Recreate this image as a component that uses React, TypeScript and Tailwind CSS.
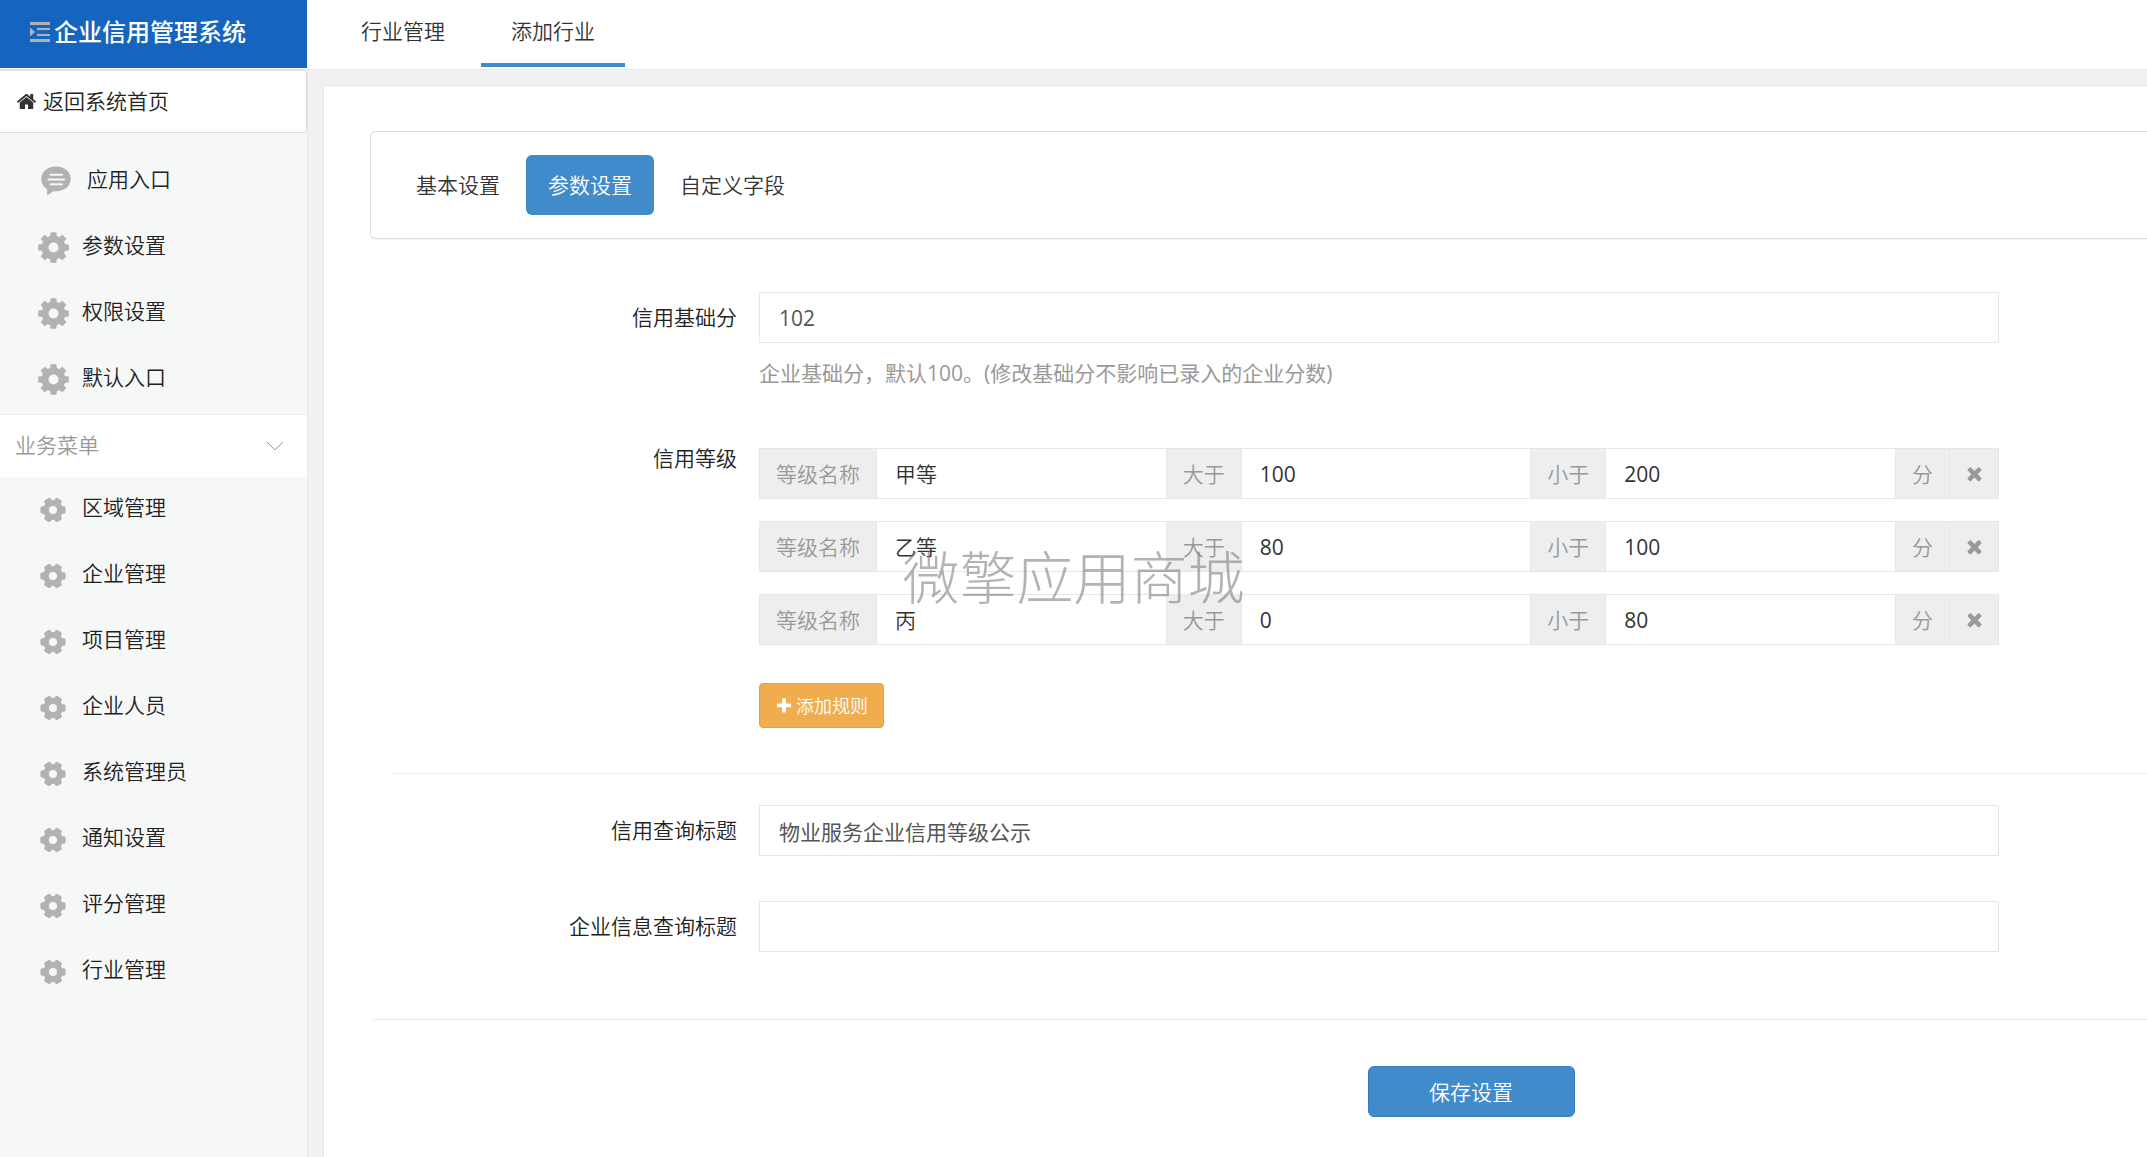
import { useState } from 'react'

interface Level {
  name: string
  above: string
  below: string
}

const topMenu = ['参数设置', '权限设置', '默认入口']
const businessMenu = [
  '区域管理',
  '企业管理',
  '项目管理',
  '企业人员',
  '系统管理员',
  '通知设置',
  '评分管理',
  '行业管理'
]
const settingTabs = ['基本设置', '参数设置', '自定义字段']

const initialLevels: Level[] = [
  { name: '甲等', above: '100', below: '200' },
  { name: '乙等', above: '80', below: '100' },
  { name: '丙', above: '0', below: '80' }
]

function IndentIcon() {
  return (
    <svg width="20" height="20" viewBox="0 0 20 20" fill="#b2b2b2">
      <rect x="0" y="0" width="20" height="3" />
      <rect x="7" y="6" width="13" height="2" />
      <rect x="7" y="12" width="13" height="2" />
      <rect x="0" y="17" width="20" height="3" />
      <path d="M0 5.500L5 10L0 14.500Z" />
    </svg>
  )
}

function HomeIcon() {
  return (
    <svg width="21" height="21" viewBox="0 0 1792 1792" fill="#333">
      <path d="M1472 992v480q0 26-19 45t-45 19h-384v-384h-256v384h-384q-26 0-45-19t-19-45v-480q0-1 .5-3t.5-3l575-474 575 474q1 2 1 6zm223-69l-62 74q-8 9-21 11h-3q-13 0-21-7l-692-577-692 577q-12 8-24 7-13-2-21-11l-62-74q-8-10-7-23.500t11-21.500l719-599q32-26 76-26t76 26l244 204v-195q0-14 9-23t23-9h192q14 0 23 9t9 23v408l219 182q10 8 11 21.500t-7 23.500z" />
    </svg>
  )
}

function PlusIcon() {
  return (
    <svg width="18" height="18" viewBox="0 0 1792 1792" fill="currentColor">
      <path d="M1600 736v192q0 40-28 68t-68 28h-416v416q0 40-28 68t-68 28h-192q-40 0-68-28t-28-68v-416h-416q-40 0-68-28t-28-68v-192q0-40 28-68t68-28h416v-416q0-40 28-68t68-28h192q40 0 68 28t28 68v416h416q40 0 68 28t28 68z" />
    </svg>
  )
}

function TimesIcon() {
  return (
    <svg width="21" height="21" viewBox="0 0 1792 1792" fill="currentColor">
      <path d="M1490 1322q0 40-28 68l-136 136q-28 28-68 28t-68-28l-294-294-294 294q-28 28-68 28t-68-28l-136-136q-28-28-28-68t28-68l294-294-294-294q-28-28-28-68t28-68l136-136q28-28 68-28t68 28l294 294 294-294q28-28 68-28t68 28l136 136q28 28 28 68t-28 68l-294 294 294 294q28 28 28 68z" />
    </svg>
  )
}

function CommentIcon() {
  return (
    <svg width="30" height="30" viewBox="0 0 30 30">
      <path
        d="M15 0.500C6.500 0.500 0.300 5.800 0.300 12.800C0.300 17.500 2.500 21 6 23L6.200 29.500L12.500 25.200C22.500 26.200 29.700 20.800 29.700 12.800C29.700 5.800 23.500 0.500 15 0.500Z"
        fill="#b2b2b2"
      />
      <path d="M9.500 8.700H21M7.500 13.500H23M9.500 18.200H21" stroke="#f6f8f8" strokeWidth="2" strokeLinecap="round" />
    </svg>
  )
}

// 8 square teeth
function GearIcon() {
  return (
    <svg width="31" height="31" viewBox="-15.5 -15.5 31 31" fill="#b2b2b2">
      <circle r="8.500" fill="none" stroke="#b2b2b2" strokeWidth="7" />
      {[0, 45, 90, 135, 180, 225, 270, 315].map(deg => (
        <path key={deg} d="M-3.500 -10L-2.900 -15.300H2.900L3.500 -10Z" transform={`rotate(${deg})`} />
      ))}
    </svg>
  )
}

// 6 rounded teeth
function CogIcon() {
  return (
    <svg width="26" height="26" viewBox="-13 -13 26 26" fill="#b2b2b2">
      <circle r="7" fill="none" stroke="#b2b2b2" strokeWidth="6" />
      {[30, 90, 150, 210, 270, 330].map(deg => (
        <rect key={deg} x="-3.800" y="-12.600" width="7.600" height="8" rx="2" transform={`rotate(${deg})`} />
      ))}
    </svg>
  )
}

function Sidebar() {
  return (
    <aside className="w-[308px] shrink-0 border-r border-[#e7e7e7] bg-[#f6f8f8]">
      <a
        href="#home"
        className="flex h-[63px] items-center gap-1.5 rounded-r border border-l-0 border-[#dddddd] bg-white pl-4"
      >
        <HomeIcon />
        <span className="pb-0.5">返回系统首页</span>
      </a>

      <nav className="pt-[15px]">
        <a href="#entry" className="flex h-[66px] items-center gap-4 pl-[41px]">
          <CommentIcon />
          <span className="pb-1">应用入口</span>
        </a>
        {topMenu.map(item => (
          <a key={item} href={`#${item}`} className="flex h-[66px] items-center gap-[13px] pl-[38px]">
            <GearIcon />
            <span className="pb-1">{item}</span>
          </a>
        ))}
      </nav>

      <button
        type="button"
        className="mt-0.5 flex h-[63px] w-full items-center justify-between border-t border-[#eeeeee] bg-white pr-[23px] pl-[15px] text-[#999999]"
      >
        <span className="pb-0.5">业务菜单</span>
        <svg width="18" height="10" viewBox="0 0 18 10" fill="none" stroke="#999">
          <path d="M1 1L9 9L17 1" />
        </svg>
      </button>

      <nav>
        {businessMenu.map(item => (
          <a key={item} href={`#${item}`} className="flex h-[66px] items-center gap-4 pl-10">
            <CogIcon />
            <span className="pb-1.5">{item}</span>
          </a>
        ))}
      </nav>
    </aside>
  )
}

function Addon({ children }: { children: string }) {
  return (
    <span className="flex shrink-0 items-center border-r border-[#e7e7eb] bg-[#eeeeee] px-4 text-[#999999]">
      {children}
    </span>
  )
}

function LevelRow({ level, onRemove }: { level: Level; onRemove: () => void }) {
  const inputClass = 'w-0 min-w-0 flex-1 border-r border-[#e7e7eb] bg-white px-[18px] text-[#333333] outline-none'
  return (
    <div className="flex h-[51px] border border-[#e7e7eb]">
      <Addon>等级名称</Addon>
      <input aria-label="等级名称" defaultValue={level.name} className={inputClass} />
      <Addon>大于</Addon>
      <input aria-label="大于" defaultValue={level.above} className={`${inputClass} font-normal`} />
      <Addon>小于</Addon>
      <input aria-label="小于" defaultValue={level.below} className={`${inputClass} font-normal`} />
      <Addon>分</Addon>
      <button
        type="button"
        aria-label="删除"
        onClick={onRemove}
        className="flex w-12 shrink-0 items-center justify-center bg-[#eeeeee] text-[#999999]"
      >
        <TimesIcon />
      </button>
    </div>
  )
}

function TextField({ id, label, value, help }: { id: string; label: string; value: string; help?: string }) {
  return (
    <div className="flex items-start">
      <label htmlFor={id} className="w-[367px] shrink-0 pt-[9px] text-right">
        {label}
      </label>
      <div className="ml-[22px] flex-1">
        <input
          id={id}
          defaultValue={value}
          className="block h-[51px] w-full border border-[#e7e7eb] bg-white px-[19px] font-normal text-[#555555] outline-none"
        />
        {help && <p className="mt-3.5 font-normal text-[#999999]">{help}</p>}
      </div>
    </div>
  )
}

export default function App() {
  const [levels, setLevels] = useState(initialLevels)
  const [activeTab, setActiveTab] = useState('参数设置')

  const addLevel = () => setLevels([...levels, { name: '', above: '', below: '' }])
  const removeLevel = (index: number) => setLevels(levels.filter((_, i) => i !== index))

  return (
    <div className="flex min-h-screen flex-col overflow-x-hidden bg-[#f1f1f1] font-['Open_Sans','Noto_Sans_CJK_SC',sans-serif] text-[21px] leading-[32px] font-[350] text-[#222222]">
      {/* Header */}
      <header className="flex h-[70px] border-b border-[#e7e7e7] bg-white">
        <div className="flex h-[68px] w-[307px] shrink-0 items-center gap-1 bg-[#1565c0] pb-1 pl-[30px] text-2xl font-medium text-white">
          <IndentIcon />
          企业信用管理系统
        </div>
        <nav className="flex h-[67px] gap-1.5 pl-6">
          <a href="#list" className="flex items-center border-b-4 border-transparent px-[30px] pb-0.5 text-[#333333]">
            行业管理
          </a>
          <a href="#add" className="flex items-center border-b-4 border-[#428bca] px-[30px] pb-0.5 text-[#333333]">
            添加行业
          </a>
        </nav>
      </header>

      <div className="flex flex-1">
        <Sidebar />

        <main className="mt-[15px] ml-[15px] flex-1 border-t border-l border-[#e7e7e7] bg-white pt-[45px] pl-[46px]">
          <div className="flex gap-1 rounded-l-md border border-r-0 border-[#dddddd] p-[23px] shadow-[0_1px_1px_rgba(0,0,0,0.05)]">
            {settingTabs.map(tab => (
              <button
                key={tab}
                type="button"
                onClick={() => setActiveTab(tab)}
                className={
                  tab === activeTab
                    ? 'h-[60px] rounded-md bg-[#428bca] px-[22px] text-white'
                    : 'h-[60px] rounded-md px-[22px] text-[#333333]'
                }
              >
                {tab}
              </button>
            ))}
          </div>

          <form>
            <div className="mt-[53px] pr-[148px]">
              <TextField
                id="base-score"
                label="信用基础分"
                value="102"
                help="企业基础分，默认100。(修改基础分不影响已录入的企业分数)"
              />

              <div className="mt-[59px] flex items-start">
                <div className="w-[367px] shrink-0 -mt-1.5 text-right">信用等级</div>
                <div className="ml-[22px] flex-1">
                  <div className="flex flex-col gap-[22px]">
                    {levels.map((level, i) => (
                      <LevelRow key={i} level={level} onRemove={() => removeLevel(i)} />
                    ))}
                  </div>
                  <button
                    type="button"
                    onClick={addLevel}
                    className="mt-[38px] flex h-[45px] items-center gap-[3px] rounded border border-[#eea236] bg-[#f0ad4e] px-[15px] text-lg text-white"
                  >
                    <PlusIcon />
                    添加规则
                  </button>
                </div>
              </div>
            </div>

            <hr className="mt-[45px] ml-[22px] border-[#eeeeee]" />

            <div className="mt-[31px] flex flex-col gap-[45px] pr-[148px]">
              <TextField id="credit-title" label="信用查询标题" value="物业服务企业信用等级公示" />
              <TextField id="info-title" label="企业信息查询标题" value="" />
            </div>

            <div className="mt-[67px] flex justify-center rounded-l-md border-t border-[#e7e7e7] pt-[46px] pb-[39px] pl-[425px]">
              <button
                type="button"
                className="h-[51px] w-[207px] rounded-md border border-[#357ebd] bg-[#428bca] text-white"
              >
                保存设置
              </button>
            </div>
          </form>
        </main>
      </div>

      {/* Watermark */}
      <div className="pointer-events-none fixed inset-0 flex items-center justify-center pb-1 text-[57px] font-light text-[#808080]/60">
        微擎应用商城
      </div>
    </div>
  )
}
